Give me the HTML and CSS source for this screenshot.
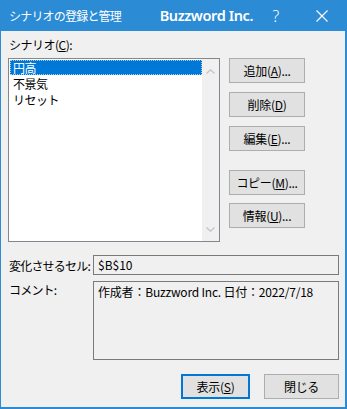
FILE: index.html
```
<!DOCTYPE html>
<html lang="ja">
<head>
  <meta charset="UTF-8" />
  <title>シナリオの登録と管理</title>
  <link rel="stylesheet" href="styles.css">
</head>
<body>

  <div class="window">
    <header class="titlebar">
      <span class="title">シナリオの登録と管理</span>
      <span class="brand">Buzzword Inc.</span>
      <span class="cap-btn help">?</span>
      <span class="cap-btn close">
        <svg width="12" height="12" viewBox="0 0 12 12"><path d="M0.5 0.5 L11.5 11.5 M11.5 0.5 L0.5 11.5" stroke="#fff" stroke-width="1.2" fill="none"/></svg>
      </span>
    </header>

    <div class="content">
      <div class="label">シナリオ(<u>C</u>):</div>
      <div class="top">
        <div class="listbox">
          <ul class="items">
            <li class="selected">円高</li>
            <li>不景気</li>
            <li>リセット</li>
          </ul>
          <div class="scrollbar">
            <svg width="9" height="5" viewBox="0 0 9 5"><path d="M0.5 4.5 L4.5 0.8 L8.5 4.5" stroke="#c2c2c2" stroke-width="1.2" fill="none"/></svg>
            <svg width="9" height="5" viewBox="0 0 9 5"><path d="M0.5 0.5 L4.5 4.2 L8.5 0.5" stroke="#c2c2c2" stroke-width="1.2" fill="none"/></svg>
          </div>
        </div>
        <div class="side-buttons">
          <button class="btn">追加(<u>A</u>)...</button>
          <button class="btn">削除(<u>D</u>)</button>
          <button class="btn">編集(<u>E</u>)...</button>
          <button class="btn sep">コピー(<u>M</u>)...</button>
          <button class="btn">情報(<u>U</u>)...</button>
        </div>
      </div>

      <div class="field-row cell-row">
        <div class="field-label">変化させるセル:</div>
        <div class="field">$B$10</div>
      </div>
      <div class="field-row comment-row">
        <div class="field-label">コメント:</div>
        <div class="field comment">作成者：Buzzword Inc. 日付：2022/7/18</div>
      </div>

      <div class="footer">
        <button class="btn default">表示(<u>S</u>)</button>
        <button class="btn close-btn">閉じる</button>
      </div>
    </div>
  </div>

</body>
</html>
```

FILE: styles.css
```
/* --- GENERAL --- */
body {
  margin: 0;
  font-family: "Noto Sans CJK JP", "Noto Sans", sans-serif;
  font-size: 12px;
  color: #000;
  background: #f0f0f0;
}
u { text-decoration: underline; text-underline-offset: 1px; }

.window {
  width: 344px;
  height: 407px;
  background: #f0f0f0;
  border: 0 solid #2b8bd4;
  border-width: 0 2px 2px 1px;
  display: flex;
  flex-direction: column;
}

/* --- TITLE BAR --- */
.titlebar {
  height: 31px;
  background: #2b8bd4;
  color: #fff;
  display: flex;
  align-items: center;
  flex-shrink: 0;
}
.title {
  flex: 1;
  padding-left: 8px;
  letter-spacing: -0.8px;
  font-size: 12px;
}
.brand {
  font-family: "Noto Sans", sans-serif;
  font-weight: 600;
  font-size: 14.5px;
  letter-spacing: -0.4px;
  padding-bottom: 1px;
}
.cap-btn {
  width: 46px;
  height: 31px;
  display: flex;
  align-items: center;
  justify-content: center;
}
.help { font-family: "Noto Sans", sans-serif; font-size: 16px; font-weight: 300; }

/* --- CONTENT --- */
.content {
  padding: 5px 6px 0 7px;
  display: flex;
  flex-direction: column;
}
.label {
  line-height: 17px;
  margin-bottom: 5px;
  padding-left: 1px;
  letter-spacing: -0.5px;
}
.top { display: flex; gap: 9px; }

.listbox {
  width: 210px;
  height: 182px;
  border: 1px solid #828790;
  background: #fff;
  display: flex;
}
.items {
  list-style: none;
  margin: 0;
  padding: 1px 0 0 1px;
  flex: 1;
}
.items li {
  height: 16px;
  line-height: 16px;
  padding-left: 3px;
  letter-spacing: -0.5px;
}
.items li.selected {
  height: 15px;
  line-height: 15px;
  margin-bottom: 1px;
  background: #0078d7;
  color: #fff;
  outline: 1px dotted #a9c9e6;
  outline-offset: -1px;
}
.scrollbar {
  width: 17px;
  background: #f0f0f0;
  display: flex;
  flex-direction: column;
  justify-content: space-between;
  align-items: center;
  padding: 10px 0 9px;
  box-sizing: border-box;
}

.side-buttons {
  display: flex;
  flex-direction: column;
  gap: 9px;
}
.btn {
  font-family: "Noto Sans CJK JP", "Noto Sans", sans-serif;
  font-size: 12px;
  background: #e1e1e1;
  border: 1px solid #adadad;
  color: #000;
  padding: 0;
  letter-spacing: -0.3px;
}
.side-buttons .btn { width: 76px; height: 25px; }
.side-buttons .btn.sep { margin-top: 10px; }
.side-buttons .btn.sep + .btn { margin-top: -1px; }

/* --- FIELDS --- */
.field-row { display: flex; }
.field-label {
  width: 84px;
  padding-left: 1px;
  letter-spacing: -0.8px;
}
.cell-row { margin-top: 13px; align-items: center; }
.field {
  flex: 1;
  border: 1px solid #7a7a7a;
  height: 18px;
  line-height: 18px;
  padding-left: 4px;
  font-family: "Noto Sans CJK JP", "Noto Sans", sans-serif;
}
.comment-row { margin-top: 6px; }
.comment-row .field-label { line-height: 16px; padding-top: 1px; }
.field.comment {
  height: 77px;
  line-height: 20px;
  padding-top: 0;
  letter-spacing: -0.2px;
}

/* --- FOOTER --- */
.footer {
  display: flex;
  justify-content: flex-end;
  gap: 14px;
  margin-top: 14px;
}
.footer .btn { height: 25px; width: 75px; }
.footer .btn.default {
  width: 69px;
  border: 2px solid #0078d7;
}
```
